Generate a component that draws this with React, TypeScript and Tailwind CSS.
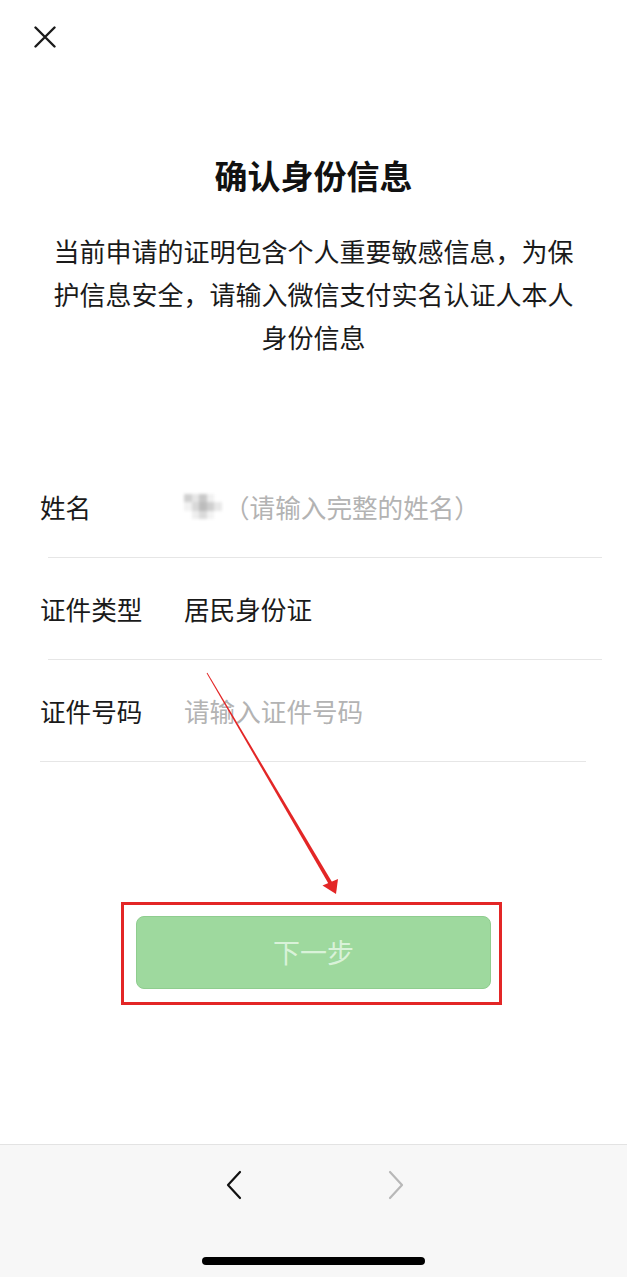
import React from "react";

const font = { fontFamily: '"Noto Sans CJK SC", "Noto Sans", sans-serif' };

interface RowProps {
  label: string;
  children: React.ReactNode;
  lineClass: string;
}

const FormRow = ({ label, children, lineClass }: RowProps) => (
  <div>
    <div className="flex h-[101px] items-center pl-[40px]">
      <span className="w-[144px] shrink-0 text-[25.6px] leading-none text-[#1a1a1a]">{label}</span>
      <div className="flex items-center text-[25.6px] leading-none">{children}</div>
    </div>
    <div className={"h-px bg-[#e6e6e6] " + lineClass} />
  </div>
);

const BlurredName = () => (
  <div className="mr-[2px] grid h-[25px] w-[38px] grid-cols-5 grid-rows-3 blur-[1.5px]">
    <div className="bg-[#d0d0d0]" />
    <div className="bg-[#e6e6e6]" />
    <div className="bg-[#c8c8c8]" />
    <div className="bg-[#f0f0f0]" />
    <div className="bg-white" />
    <div className="bg-[#f2f2f2]" />
    <div className="bg-[#d8d8d8]" />
    <div className="bg-[#bcbcbc]" />
    <div className="bg-[#cfcfcf]" />
    <div className="bg-[#e8e8e8]" />
    <div className="bg-white" />
    <div className="bg-[#eeeeee]" />
    <div className="bg-[#dadada]" />
    <div className="bg-[#f3f3f3]" />
    <div className="bg-white" />
  </div>
);

export default function App() {
  return (
    <div className="relative flex h-[1277px] w-full flex-col overflow-hidden bg-white" style={font}>
      {/* close */}
      <div className="pl-[34px] pt-[26px]">
        <svg width="22" height="22" viewBox="0 0 22 22" fill="none" stroke="#1a1a1a" strokeWidth="2.4" strokeLinecap="round">
          <path d="M1.5 1.5L20.5 20.5M20.5 1.5L1.5 20.5" />
        </svg>
      </div>

      <h1 className="mt-[105px] text-center text-[33px] font-bold leading-[44px] text-[#111111]">确认身份信息</h1>
      <p className="mt-[32px] px-[50px] text-center text-[26px] leading-[43px] text-[#1a1a1a]">
        当前申请的证明包含个人重要敏感信息，为保护信息安全，请输入微信支付实名认证人本人身份信息
      </p>

      <div className="mt-[98px]">
        <FormRow label="姓名" lineClass="ml-[48px] mr-[25px]">
          <BlurredName />
          <span className="text-[#b3b3b3]">（请输入完整的姓名）</span>
        </FormRow>
        <FormRow label="证件类型" lineClass="ml-[48px] mr-[25px]">
          <span className="text-[#1a1a1a]">居民身份证</span>
        </FormRow>
        <FormRow label="证件号码" lineClass="ml-[40px] mr-[41px]">
          <span className="text-[#b3b3b3]">请输入证件号码</span>
        </FormRow>
      </div>

      {/* highlighted button */}
      <div className="ml-[121px] mt-[140px] w-[381px] border-[3px] border-[#e32626] pb-[13px] pl-[12px] pr-[8px] pt-[11px]">
        <button className="flex h-[73px] w-[355px] items-center justify-center rounded-[8px] border border-[#8fcd8f] bg-[#9ed99e] text-[27px] text-[#d9f2d9]">
          下一步
        </button>
      </div>

      {/* bottom toolbar */}
      <div className="mt-auto flex h-[133px] flex-col border-t border-[#e3e3e3] bg-[#f7f7f7]">
        <div className="mt-[25px] flex justify-center gap-[146px] pl-[2px]">
          <svg width="16" height="30" viewBox="0 0 16 30" fill="none" stroke="#111111" strokeWidth="2.2" strokeLinecap="round" strokeLinejoin="round">
            <path d="M14 2L2 15L14 28" />
          </svg>
          <svg width="16" height="30" viewBox="0 0 16 30" fill="none" stroke="#b8b8b8" strokeWidth="2.2" strokeLinecap="round" strokeLinejoin="round">
            <path d="M2 2L14 15L2 28" />
          </svg>
        </div>
        <div className="mx-auto mt-[57px] h-[8px] w-[223px] rounded-full bg-black" />
      </div>

      {/* annotation arrow */}
      <svg className="pointer-events-none absolute left-0 top-0" width="627" height="1277" viewBox="0 0 627 1277">
        <polygon points="207.4,672.7 334.7,886.5 331.3,888.5 206.6,673.3" fill="#e32626" />
        <polygon points="336,894 322.5,885.5 338,879" fill="#e32626" />
      </svg>
    </div>
  );
}
